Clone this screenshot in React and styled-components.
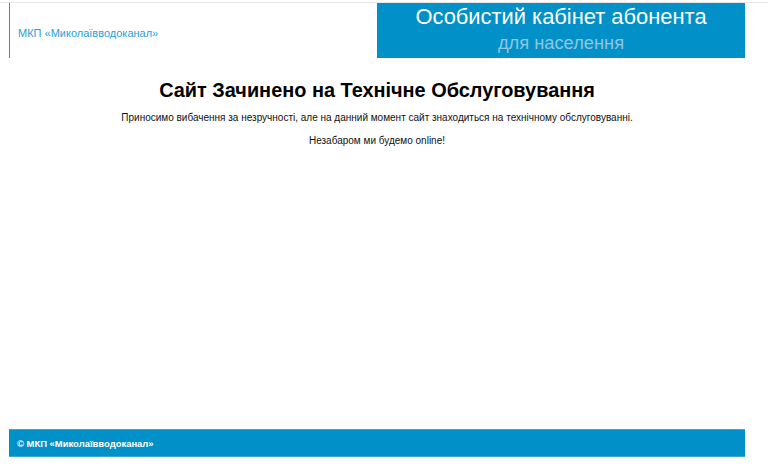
import styled, { createGlobalStyle } from "styled-components";

const GlobalStyle = createGlobalStyle`
  html, body {
    margin: 0;
    padding: 0;
    background: #ffffff;
    font-family: "Liberation Sans", Arial, sans-serif;
  }
`;

const Page = styled.div`
  min-height: 100vh;
  box-sizing: border-box;
  display: flex;
  flex-direction: column;
  padding-top: 3px;
  padding-bottom: 10px;
  background: linear-gradient(#e6e6e6, #e6e6e6) 0 2px / 100% 1px no-repeat;
`;

const Container = styled.div`
  width: 736px;
  margin-left: 9px;
  flex: 1;
  display: flex;
  flex-direction: column;
`;

const Header = styled.header`
  display: grid;
  grid-template-columns: 1fr 1fr;
  height: 55px;
`;

const Brand = styled.div`
  border-left: 1px solid #1a9bd0;
  display: flex;
  align-items: center;
  padding-left: 8px;
  padding-top: 4px;
  font-size: 11px;
  color: #2a9fd6;
`;

const Cabinet = styled.div`
  background: #0190c7;
  display: flex;
  flex-direction: column;
  align-items: center;
  padding-top: 1px;
`;

const CabinetTitle = styled.div`
  color: #ffffff;
  font-size: 21.9px;
  line-height: 26px;
`;

const CabinetSub = styled.div`
  color: #8ec6df;
  font-size: 18.3px;
  line-height: 26px;
`;

const Main = styled.main`
  flex: 1;
  text-align: center;
  padding-top: 20px;
`;

const Title = styled.h1`
  margin: 0 0 9px;
  font-size: 19.9px;
  line-height: 24px;
  font-weight: bold;
  color: #000;
`;

const Text = styled.p`
  margin: 0 0 10px;
  font-size: 10px;
  line-height: 13px;
  color: #111;
`;

const Footer = styled.footer`
  height: 28px;
  background: #0190c7;
  border-top: 1px solid #35a9d6;
  border-bottom: 1px solid #35a9d6;
  box-sizing: border-box;
  display: flex;
  align-items: center;
  padding-left: 8px;
  color: #ffffff;
  font-weight: bold;
  font-size: 9.45px;
`;

const App = () => {
  return (
    <Page>
      <GlobalStyle />
      <Container>
        <Header>
          <Brand>МКП «Миколаївводоканал»</Brand>
          <Cabinet>
            <CabinetTitle>Особистий кабінет абонента</CabinetTitle>
            <CabinetSub>для населення</CabinetSub>
          </Cabinet>
        </Header>
        <Main>
          <Title>Сайт Зачинено на Технічне Обслуговування</Title>
          <Text>
            Приносимо вибачення за незручності, але на данний момент сайт
            знаходиться на технічному обслуговуванні.
          </Text>
          <Text>Незабаром ми будемо online!</Text>
        </Main>
        <Footer>© МКП «Миколаївводоканал»</Footer>
      </Container>
    </Page>
  );
};

export default App;
